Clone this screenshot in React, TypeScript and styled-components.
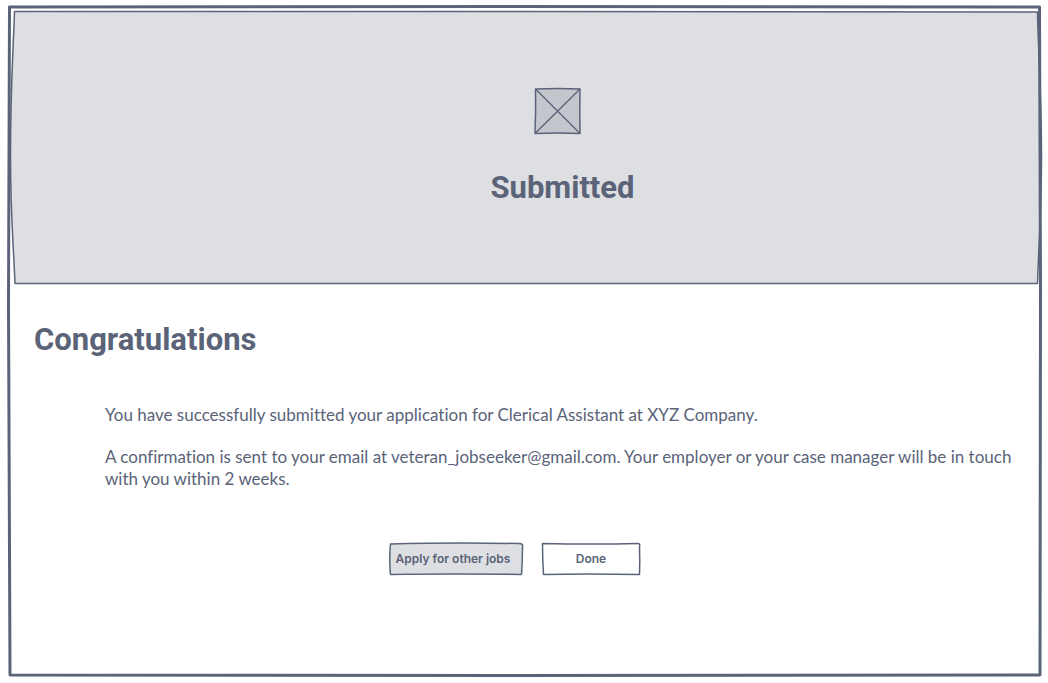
import React from "react";
import styled, { createGlobalStyle } from "styled-components";

const INK = "#5a6378";
const PANEL = "#dedfe3";

const GlobalStyle = createGlobalStyle`
  *, *::before, *::after { box-sizing: border-box; }
  body {
    margin: 0;
    background: #ffffff;
    color: ${INK};
    font-family: Lato, "Liberation Sans", sans-serif;
    font-variant-ligatures: none;
  }
`;

const Page = styled.div`
  display: flex;
  min-height: 100vh;
  padding: 6px 6px 6px 8px;
`;

const Frame = styled.main`
  position: relative;
  flex: 1;
  display: flex;
  flex-direction: column;
`;

const Sketch = styled.svg`
  position: absolute;
  inset: 0;
  width: 100%;
  height: 100%;
  overflow: visible;
  pointer-events: none;

  path {
    stroke: ${INK};
    stroke-linejoin: round;
    stroke-linecap: round;
    vector-effect: non-scaling-stroke;
  }
`;

const Hero = styled.header`
  position: relative;
  display: flex;
  flex-direction: column;
  align-items: center;
  gap: 33px;
  padding: 81px 0 76px 75px;
`;

const Placeholder = styled.svg`
  position: relative;
  width: 48px;
  height: 48px;
  margin-right: 10px;
`;

const Title = styled.h1`
  position: relative;
  margin: 0;
  font-family: Roboto, sans-serif;
  font-size: 31px;
  line-height: 40px;
  font-weight: 700;
`;

const Content = styled.section`
  padding: 36px 24px 0 26px;
`;

const Heading = styled.h2`
  margin: 0;
  font-family: Roboto, sans-serif;
  font-size: 31px;
  line-height: 40px;
  font-weight: 700;
`;

const Message = styled.div`
  display: flex;
  flex-direction: column;
  gap: 20px;
  padding: 44px 0 0 71px;
`;

const Paragraph = styled.p`
  margin: 0;
  font-size: 17px;
  line-height: 22px;
`;

const Actions = styled.div`
  display: flex;
  justify-content: center;
  gap: 19px;
  padding: 53px 23px 0 0;
`;

const Button = styled.button<{ $width: number; $shift?: number }>`
  position: relative;
  width: ${(p) => p.$width}px;
  height: 32px;
  padding: 0 ${(p) => p.$shift ?? 0}px 0 0;
  border: 0;
  background: transparent;
  color: ${INK};
  font-family: Inter, sans-serif;
  font-size: 12px;
  line-height: 16px;
  font-weight: 600;
  white-space: nowrap;
  cursor: pointer;
`;

const Label = styled.span`
  position: relative;
`;

export default function App() {
  return (
    <>
      <GlobalStyle />
      <Page>
        <Frame>
          <Hero>
            <Sketch viewBox="0 0 1034 278" preserveAspectRatio="none" aria-hidden="true">
              <path
                d="M6.500 5.500 L500 5.500 L1029.500 6 C1030 40 1033.500 90 1033.500 150 C1033.500 200 1031 235 1029.500 277.500 L500 277.500 L7 277.500 C5 230 2.500 210 2.500 150 C2.500 80 5 50 6.500 5.500 Z"
                fill={PANEL}
                strokeWidth="1.500"
              />
            </Sketch>
            <Placeholder viewBox="0 0 48 48" aria-hidden="true">
              <path
                d="M1.500 2 Q24 0.800 46 2 Q45.500 24 46 46.500 Q24 45.500 1 46.500 Q2 24 1.500 2 Z"
                fill="#c3c6cd"
                stroke={INK}
                strokeWidth="1.500"
                strokeLinejoin="round"
              />
              <path d="M1.500 2 L46 46.500 M46 2 L1 46.500" fill="none" stroke={INK} strokeWidth="1.300" />
            </Placeholder>
            <Title>Submitted</Title>
          </Hero>
          <Content>
            <Heading>Congratulations</Heading>
            <Message>
              <Paragraph>
                You have successfully submitted your application for Clerical Assistant at XYZ Company.
              </Paragraph>
              <Paragraph>
                A confirmation is sent to your email at veteran_jobseeker@gmail.com. Your employer or your case
                manager will be in touch with you within 2 weeks.
              </Paragraph>
            </Message>
            <Actions>
              <Button type="button" $width={134} $shift={6}>
                <Sketch viewBox="0 0 134 32" preserveAspectRatio="none" aria-hidden="true">
                  <path
                    d="M1.500 1 Q60 -0.500 130 0.500 Q134.500 0.500 133.500 4 Q133.500 18 132.500 31.500 Q60 30.500 1.500 31.500 Q0 16 1.500 1 Z"
                    fill={PANEL}
                    strokeWidth="1.500"
                  />
                </Sketch>
                <Label>Apply for other jobs</Label>
              </Button>
              <Button type="button" $width={98}>
                <Sketch viewBox="0 0 98 32" preserveAspectRatio="none" aria-hidden="true">
                  <path
                    d="M0.500 0.500 Q50 1.500 96 0.500 Q98.500 0.500 97.500 4 Q98 18 97.500 31.500 Q45 30.500 1.500 31.500 Q0.500 16 0.500 0.500 Z"
                    fill="#ffffff"
                    strokeWidth="1.500"
                  />
                </Sketch>
                <Label>Done</Label>
              </Button>
            </Actions>
          </Content>
          <Sketch viewBox="0 0 1034 671" preserveAspectRatio="none" aria-hidden="true">
            <path
              d="M1.500 1 L500 0.500 L1031.500 1 Q1032 150 1032.500 280 Q1032.500 480 1032 669 L500 669.500 L2 669 Q1.500 450 0.500 300 Q0.500 150 1.500 1 Z"
              fill="none"
              strokeWidth="3"
            />
          </Sketch>
        </Frame>
      </Page>
    </>
  );
}
